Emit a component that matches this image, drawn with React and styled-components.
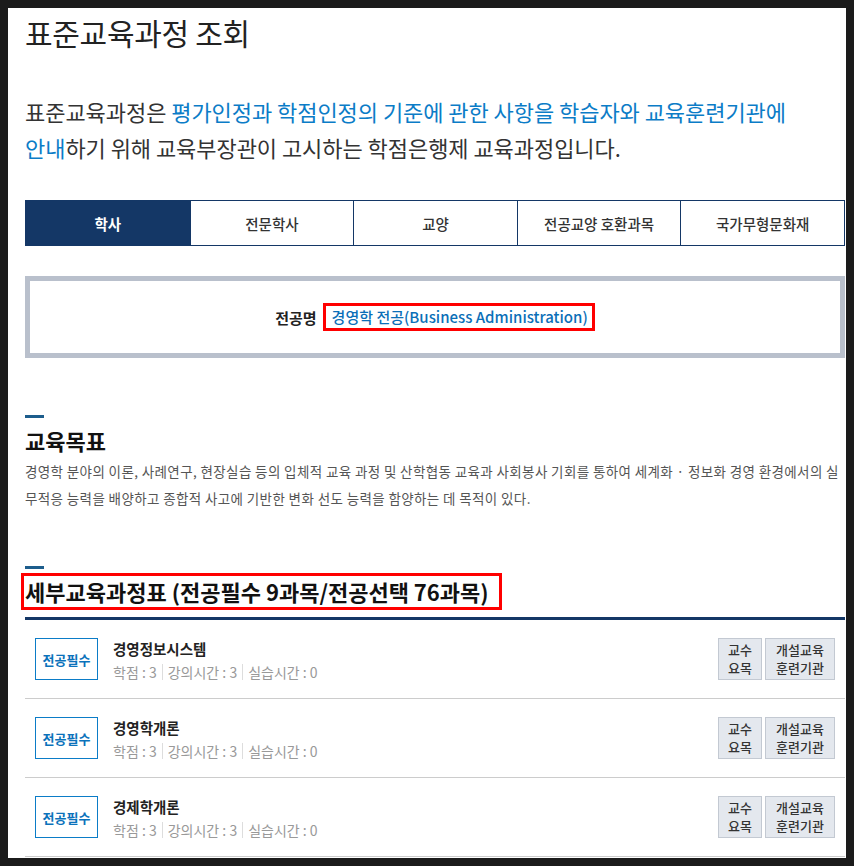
import React from 'react';
import styled, { createGlobalStyle } from 'styled-components';

const Global = createGlobalStyle`
  html { background: #1b1b1b; }
  body {
    margin: 8px;
    background: #1b1b1b;
    font-family: "Noto Sans CJK KR", "Noto Sans", sans-serif;
  }
  * { box-sizing: border-box; }
`;

const Page = styled.div`
  width: 838px;
  height: 850px;
  overflow: hidden;
  background: #fff;
  padding: 0 1px 0 17px;
`;

const Title = styled.h1`
  margin: 0;
  padding-top: 4px;
  font-size: 30px;
  font-weight: 400;
  line-height: 40px;
  letter-spacing: -0.3px;
  color: #222;
`;

const Lead = styled.p`
  margin: 41px 0 0;
  font-size: 22px;
  line-height: 36px;
  letter-spacing: -0.05px;
  word-break: keep-all;
  color: #333;
`;

const Em = styled.span`
  color: #0b7cc7;
`;

const Tabs = styled.ul`
  list-style: none;
  margin: 35px 0 0;
  padding: 0;
  display: grid;
  grid-template-columns: repeat(5, 1fr);
  border: 1px solid #143766;
`;

const Tab = styled.li`
  height: 44px;
  display: flex;
  align-items: center;
  justify-content: center;
  font-size: 14.5px;
  font-weight: ${p => (p.$active ? 700 : 500)};
  color: ${p => (p.$active ? '#fff' : '#333')};
  background: ${p => (p.$active ? '#143766' : '#fff')};
  & + & { border-left: 1px solid #143766; }
`;

const MajorBox = styled.div`
  margin-top: 30px;
  height: 82px;
  border: 5px solid #b9c0cc;
  display: flex;
  align-items: center;
  justify-content: center;
  gap: 6px;
  font-size: 15px;
`;

const MajorLabel = styled.strong`
  color: #222;
  font-weight: 700;
`;

const MajorLink = styled.span`
  color: #0b6fb8;
  font-weight: 500;
  border: 3px solid #f00;
  padding: 1px 4px 1px 6px;
  line-height: 20px;
`;

const Section = styled.section`
  margin-top: ${p => p.$top}px;
  &::before {
    content: '';
    display: block;
    width: 19px;
    height: 3px;
    background: #1d5d8c;
  }
`;

const H3 = styled.h3`
  margin: 8px 0 0;
  font-size: 22px;
  font-weight: 700;
  line-height: 28px;
  color: #111;
`;

const MarkedH3 = styled(H3)`
  width: fit-content;
  margin: 4px 0 0 -4px;
  padding: 0 10px 0 1px;
  border: 3px solid #f00;
  line-height: 31px;
`;

const Desc = styled.p`
  margin: 4px 0 0;
  font-size: 13.5px;
  line-height: 27px;
  color: #555;
  letter-spacing: 0.38px;
`;

const List = styled.ul`
  list-style: none;
  margin: 7px 0 0;
  padding: 0;
  border-top: 3px solid #143766;
`;

const Row = styled.li`
  display: flex;
  align-items: center;
  padding: 18px 10px;
  border-bottom: 1px solid #ccc;
`;

const Badge = styled.span`
  width: 63px;
  height: 42px;
  flex: none;
  border: 1px solid #0b7cc7;
  display: flex;
  align-items: center;
  justify-content: center;
  font-size: 13px;
  font-weight: 700;
  color: #0b72bb;
`;

const Info = styled.div`
  margin-left: 15px;
  flex: 1;
`;

const Name = styled.div`
  font-size: 14.5px;
  font-weight: 700;
  color: #222;
  line-height: 20px;
`;

const Meta = styled.div`
  margin-top: 5px;
  display: flex;
  font-size: 14px;
  line-height: 16px;
  color: #999;
`;

const MetaItem = styled.span`
  & + & {
    margin-left: 5px;
    padding-left: 5px;
    border-left: 1px solid #ddd;
  }
`;

const Buttons = styled.div`
  display: flex;
  gap: 3px;
`;

const Btn = styled.button`
  width: ${p => p.$w}px;
  height: 42px;
  padding: 0;
  border: 1px solid #c3c9d2;
  background: #e4e8ee;
  font-family: inherit;
  font-size: 13px;
  font-weight: 500;
  line-height: 18px;
  color: #333;
`;

const courses = ['경영정보시스템', '경영학개론', '경제학개론'];
const tabs = ['학사', '전문학사', '교양', '전공교양 호환과목', '국가무형문화재'];

export default function App() {
  return (
    <>
      <Global />
      <Page>
        <Title>표준교육과정 조회</Title>
        <Lead>
          표준교육과정은 <Em>평가인정과 학점인정의 기준에 관한 사항을 학습자와 교육훈련기관에 안내</Em>하기 위해 교육부장관이 고시하는 학점은행제 교육과정입니다.
        </Lead>
        <Tabs>
          {tabs.map((t, i) => (
            <Tab key={t} $active={i === 0}>{t}</Tab>
          ))}
        </Tabs>
        <MajorBox>
          <MajorLabel>전공명</MajorLabel>
          <MajorLink>경영학 전공(Business Administration)</MajorLink>
        </MajorBox>
        <Section $top={57}>
          <H3>교육목표</H3>
          <Desc>
            경영학 분야의 이론, 사례연구, 현장실습 등의 입체적 교육 과정 및 산학협동 교육과 사회봉사 기회를 통하여 세계화 · 정보화 경영 환경에서의 실무적응 능력을 배양하고 종합적 사고에 기반한 변화 선도 능력을 함양하는 데 목적이 있다.
          </Desc>
        </Section>
        <Section $top={54}>
          <MarkedH3>세부교육과정표 (전공필수 9과목/전공선택 76과목)</MarkedH3>
          <List>
            {courses.map(c => (
              <Row key={c}>
                <Badge>전공필수</Badge>
                <Info>
                  <Name>{c}</Name>
                  <Meta>
                    <MetaItem>학점 : 3</MetaItem>
                    <MetaItem>강의시간 : 3</MetaItem>
                    <MetaItem>실습시간 : 0</MetaItem>
                  </Meta>
                </Info>
                <Buttons>
                  <Btn $w={44}>교수<br />요목</Btn>
                  <Btn $w={70}>개설교육<br />훈련기관</Btn>
                </Buttons>
              </Row>
            ))}
          </List>
        </Section>
      </Page>
    </>
  );
}
